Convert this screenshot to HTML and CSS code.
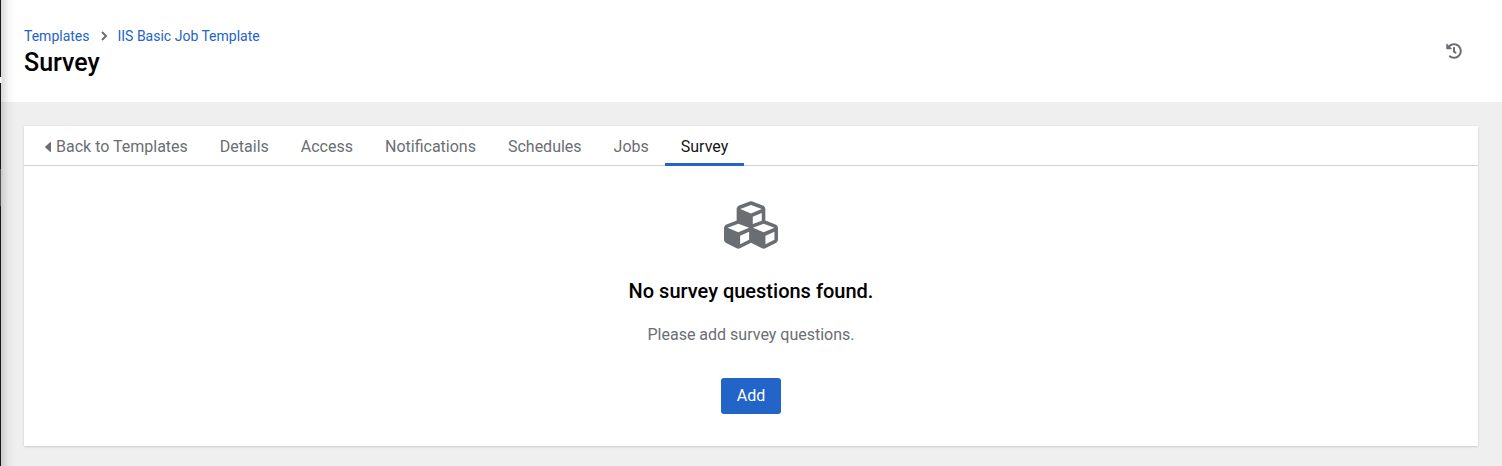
FILE: index.html
```html
<!DOCTYPE html>
<html lang="en">
<head>
<meta charset="utf-8">
<meta name="viewport" content="width=device-width, initial-scale=1">
<title>Survey</title>
<link rel="stylesheet" href="styles.css">
</head>
<body>
<div class="page">
  <div class="sidebar-edge"><span class="sidebar-mark"></span><span class="sidebar-item"></span></div>
  <header class="page-header">
    <div class="heading">
      <nav class="breadcrumb" aria-label="Breadcrumb">
        <a href="#">Templates</a>
        <svg class="chevron" viewBox="0 0 8 10" aria-hidden="true"><path d="M2 1l4 4-4 4" fill="none" stroke="currentColor" stroke-width="2"/></svg>
        <a href="#">IIS Basic Job Template</a>
      </nav>
      <h1>Survey</h1>
    </div>
    <button class="history" type="button" aria-label="View activity stream">
      <svg viewBox="0 0 512 512" aria-hidden="true"><path fill="currentColor" d="M504 255.531c.253 136.64-111.18 248.372-247.82 248.468-59.015.042-113.223-20.53-155.822-54.911-11.077-8.94-11.905-25.541-1.839-35.607l11.267-11.267c8.609-8.609 22.353-9.551 31.891-1.984C173.062 425.135 212.781 440 256 440c101.705 0 184-82.311 184-184 0-101.705-82.311-184-184-184-48.814 0-93.149 18.969-126.068 49.932l50.754 50.754c10.08 10.08 2.941 27.314-11.313 27.314H24c-8.837 0-16-7.163-16-16V38.627c0-14.254 17.234-21.393 27.314-11.314l49.372 49.372C129.209 34.136 189.552 8 256 8c136.81 0 247.747 110.78 248 247.531zm-180.912 78.784l9.823-12.63c8.138-10.463 6.253-25.542-4.21-33.679L288 256.349V152c0-13.255-10.745-24-24-24h-16c-13.255 0-24 10.745-24 24v135.651l65.409 50.874c10.463 8.137 25.541 6.253 33.679-4.21z"/></svg>
    </button>
  </header>
  <main class="content">
    <section class="card">
      <nav class="tabs" aria-label="Template sections">
        <a class="tab" href="#"><svg class="caret" viewBox="0 0 6 10" aria-hidden="true"><path fill="currentColor" d="M6 .6v8.8c0 .5-.6.7-.9.4L.3 5.4a.6.6 0 0 1 0-.8L5.1.2c.3-.3.9-.1.9.4z"/></svg>Back to Templates</a>
        <a class="tab" href="#">Details</a>
        <a class="tab" href="#">Access</a>
        <a class="tab" href="#">Notifications</a>
        <a class="tab" href="#">Schedules</a>
        <a class="tab" href="#">Jobs</a>
        <a class="tab current" href="#" aria-current="page">Survey</a>
      </nav>
      <div class="empty">
        <svg class="cubes" viewBox="0 0 512 512" aria-hidden="true"><path fill="currentColor" d="M488.6 250.2L392 214V105.5c0-15-9.3-28.4-23.4-33.7l-100-37.5c-8.1-3.1-17.1-3.1-25.3 0l-100 37.5c-14.1 5.3-23.4 18.7-23.4 33.7V214l-96.6 36.2C9.3 255.5 0 268.9 0 283.9V394c0 13.6 7.7 26.1 19.9 32.2l100 50c10.1 5.1 22.1 5.1 32.2 0l103.9-52 103.9 52c10.1 5.1 22.1 5.1 32.2 0l100-50c12.2-6.1 19.9-18.6 19.9-32.2V283.9c0-15-9.3-28.4-23.4-33.7zM358 214.8l-85 31.9v-68.2l85-37v73.3zM154 104.1l102-38.2 102 38.2v.6l-102 41.4-102-41.4v-.6zm84 291.1l-85 42.5v-79.1l85-38.8v75.4zm0-112l-102 41.4-102-41.4v-.6l102-38.2 102 38.2v.6zm240 112l-85 42.5v-79.1l85-38.8v75.4zm0-112l-102 41.4-102-41.4v-.6l102-38.2 102 38.2v.6z"/></svg>
        <h2>No survey questions found.</h2>
        <p>Please add survey questions.</p>
        <button class="primary" type="button">Add</button>
      </div>
    </section>
  </main>
</div>
</body>
</html>
```
FILE: styles.css
```css
* {
  box-sizing: border-box;
}

body {
  margin: 0;
  background: #efefef;
  color: #000;
  font-family: Roboto, "Liberation Sans", sans-serif;
  font-size: 16px;
  line-height: 24px;
}

a {
  color: #2264c8;
  text-decoration: none;
}

h1,
h2,
p {
  margin: 0;
}

.page {
  position: relative;
  min-height: 100vh;
}

/* Right edge of the collapsed sidebar and the shadow it casts */
.sidebar-edge {
  position: absolute;
  top: 0;
  bottom: 0;
  left: 0;
  width: 16px;
  border-left: 1px solid #16181d;
  background: linear-gradient(to right, rgba(0, 0, 0, 0.15), rgba(0, 0, 0, 0.03) 50%, transparent);
  pointer-events: none;
}

.sidebar-mark,
.sidebar-item {
  position: absolute;
  left: -1px;
}

.sidebar-mark {
  top: 77px;
  width: 2px;
  height: 6px;
  background: #f0f0f0;
}

.sidebar-item {
  top: 169px;
  width: 1px;
  height: 37px;
  background: #4f5255;
}

.page-header {
  display: flex;
  align-items: center;
  justify-content: space-between;
  padding: 24px 40px 24px 24px;
  background: #fff;
}

.breadcrumb {
  display: flex;
  align-items: center;
  gap: 10px;
  font-size: 14px;
}

.chevron {
  width: 8px;
  height: 10px;
  color: #6a6e73;
}

h1 {
  font-size: 25px;
  font-weight: 500;
  line-height: 30px;
}

.history {
  display: flex;
  padding: 0;
  border: 0;
  background: none;
  color: #6a6e73;
}

.history svg {
  width: 16px;
  height: 16px;
}

.content {
  padding: 24px 24px 20px;
}

.card {
  background: #fff;
  box-shadow: 0 1px 2px rgba(3, 3, 3, 0.12), 0 0 2px rgba(3, 3, 3, 0.06);
}

.tabs {
  display: flex;
  padding-left: 5px;
  border-bottom: 1px solid #d2d2d2;
}

.tab {
  display: flex;
  align-items: center;
  margin-bottom: -1px;
  padding: 9px 16px 4px;
  border-bottom: 3px solid transparent;
  color: #6a6e73;
}

.tab.current {
  border-color: #2264c8;
  color: #151515;
}

.caret {
  width: 6px;
  height: 10px;
  margin-right: 5px;
}

.empty {
  display: flex;
  flex-direction: column;
  align-items: center;
  padding: 32px;
}

.cubes {
  width: 54px;
  height: 54px;
  margin-bottom: 24px;
  color: #6a6e73;
}

h2 {
  font-size: 20px;
  font-weight: 500;
  line-height: 30px;
}

.empty p {
  margin: 17px 0 31px;
  color: #6a6e73;
}

.primary {
  padding: 6px 16px;
  border: 0;
  border-radius: 3px;
  background: #2264c8;
  color: #fff;
  font: inherit;
}
```
